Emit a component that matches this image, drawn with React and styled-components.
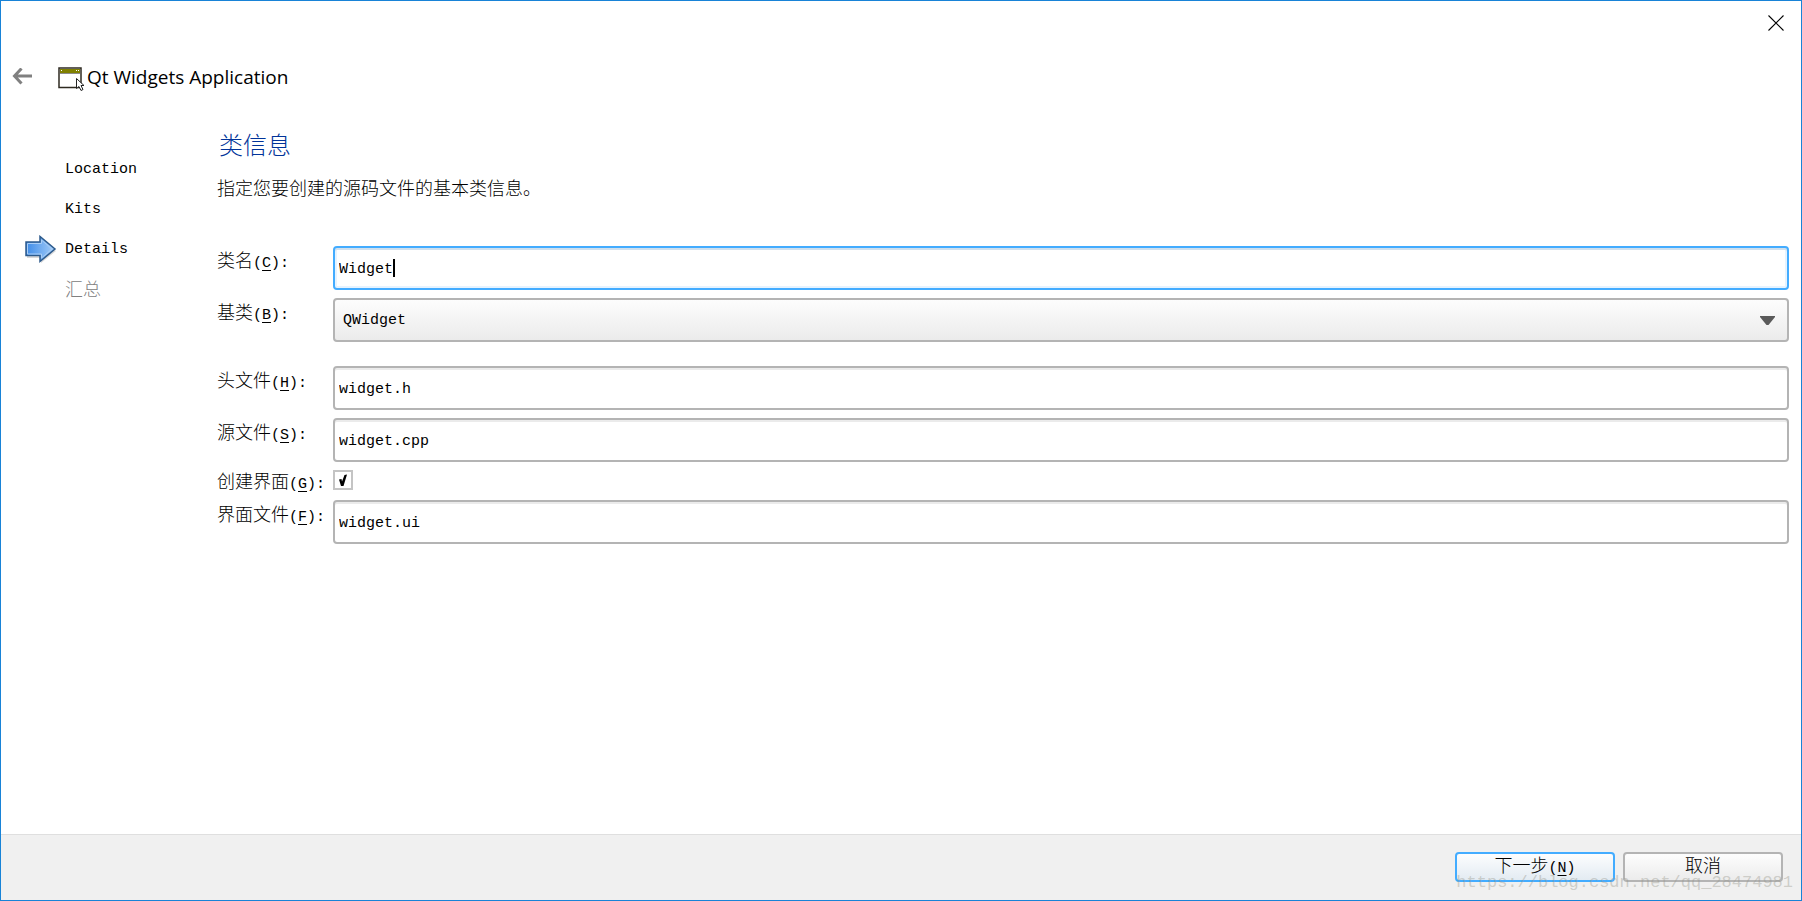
import React, { useState } from 'react';
import styled, { createGlobalStyle, css } from 'styled-components';

const GlobalStyle = createGlobalStyle`
    * {
        box-sizing: border-box;
    }

    body {
        margin: 0;
        font-family: "Liberation Mono", "Noto Sans CJK SC", monospace;
        font-size: 15px;
        line-height: 20px;
        color: #000;
    }
`;

const Window = styled.div`
    position: relative;
    display: flex;
    flex-direction: column;
    min-height: 100vh;
    border: 1px solid #1883d7;
    background: #fff;
`;

const TitleBar = styled.div`
    display: flex;
    justify-content: flex-end;
    padding: 14px 17px 0 0;
`;

const IconButton = styled.button`
    display: flex;
    padding: 0;
    border: 0;
    background: none;
`;

const Header = styled.header`
    display: flex;
    align-items: center;
    height: 28px;
    margin-top: 32px;
    padding-left: 11px;
`;

const AppIcon = styled.svg`
    margin: 4px 1px 0 25px;
`;

const Title = styled.h1`
    margin: 0;
    font: 400 19px/28px "Open Sans", "Noto Sans", sans-serif;
`;

const Body = styled.div`
    display: flex;
    flex: 1;
    padding: 37px 12px 28px 23px;
`;

const Steps = styled.ol`
    flex: none;
    width: 193px;
    margin: 0;
    padding: 22px 0 0;
    list-style: none;
`;

const Step = styled.li`
    display: flex;
    align-items: center;
    height: 40px;
    color: ${props => props.$pending ? '#808080' : '#000'};
`;

const Marker = styled.span`
    display: flex;
    flex: none;
    width: 41px;
`;

const Cjk = styled.span`
    font-family: "Noto Sans CJK SC", sans-serif;
    font-size: 18px;
    font-weight: 300;
`;

const Page = styled.main`
    flex: 1;
    min-width: 0;
`;

const Heading = styled.h2`
    margin: 0;
    padding-left: 2px;
    font: 300 24px/32px "Noto Sans CJK SC", sans-serif;
    color: #003399;
`;

const Description = styled.p`
    margin: 15px 0 47px;
    font: 300 18px/24px "Noto Sans CJK SC", sans-serif;
`;

const Form = styled.form`
    display: flex;
    flex-direction: column;
    gap: 8px;
`;

const Row = styled.div`
    display: grid;
    grid-template-columns: 116px 1fr;
    align-items: start;
    margin-bottom: ${props => props.$spaced ? '16px' : '0'};
`;

const Label = styled.label`
    padding-top: ${props => props.$compact ? '0' : '3px'};
    white-space: nowrap;
`;

const Mnemonic = styled.span`
    text-decoration: underline;
    text-underline-offset: 3px;
`;

const field = css`
    width: 100%;
    height: 44px;
    border: 2px solid #b4b4b4;
    border-radius: 4px;
    font: inherit;
    color: #000;
    outline: none;
`;

const TextInput = styled.input`
    ${field}
    padding: 3px 4px 0;
    background: #fff;
    box-shadow: inset 0 2px #ebebeb;
    caret-color: transparent;

    &:focus {
        border-color: #43acff;
        box-shadow: inset 0 2px #d0e0ee, inset 0 0 0 2px #e6f3ff;
    }
`;

const Stack = styled.div`
    display: grid;
    align-items: center;

    & > * {
        grid-area: 1 / 1;
    }
`;

const TextCursor = styled.span`
    visibility: hidden;
    width: 2px;
    height: 18px;
    margin-left: 6px;
    background: #000;
    pointer-events: none;

    ${TextInput}:focus + & {
        visibility: visible;
    }
`;

const Select = styled.select`
    ${field}
    padding: 2px 40px 0 8px;
    appearance: none;
    background: linear-gradient(#fdfdfd, #ebebeb);
`;

const Caret = styled.svg`
    justify-self: end;
    margin-right: 14px;
    pointer-events: none;
`;

const CheckRow = styled(Row)`
    height: 22px;
`;

const CheckBox = styled(Stack)`
    width: 20px;
    height: 20px;
`;

const CheckInput = styled.input`
    width: 20px;
    height: 20px;
    margin: 0;
    border: 2px solid #c4c4c4;
    appearance: none;
    background: #fff;

    &:not(:checked) + svg {
        display: none;
    }
`;

const Tick = styled.svg`
    pointer-events: none;
`;

const Footer = styled.footer`
    display: flex;
    justify-content: flex-end;
    gap: 8px;
    height: 66px;
    padding: 17px 18px 0;
    border-top: 1px solid #dfdfdf;
    background: #f0f0f0;
`;

const Button = styled.button`
    width: 160px;
    height: 30px;
    padding: 0 0 2px;
    border: 2px solid ${props => props.$primary ? '#43acff' : '#b4b4b4'};
    border-radius: 4px;
    background: ${props => props.$primary
        ? 'linear-gradient(#fcfdfe, #e3ebf2)'
        : 'linear-gradient(#fdfdfd, #ececec)'};
    font: inherit;
    color: #000;
`;

const Watermark = styled.span`
    position: absolute;
    right: 8px;
    bottom: 7px;
    font-size: 17px;
    color: rgba(150, 150, 140, 0.4);
    pointer-events: none;
`;

const BackIcon = () => (
    <svg width="21" height="18" viewBox="0 0 21 18" fill="none" stroke="#808080" strokeWidth="3">
        <path d="M20 8H3M9.500 .5L2.500 8l7 7.500" />
    </svg>
);

const CloseIcon = () => (
    <svg width="16" height="16" viewBox="0 0 16 16" stroke="#000" strokeWidth="1.1">
        <path d="M.5 .5l15 15M15.5 .5l-15 15" />
    </svg>
);

const WindowIcon = () => (
    <AppIcon width="28" height="25" viewBox="0 0 28 25">
        <rect x="1" y="1" width="22" height="19.500" fill="#fff" stroke="#2e2a20" strokeWidth="1.500" />
        <rect x="2" y="2" width="20" height="4" fill="#808000" />
        <rect x="2" y="6" width="20" height="1" fill="#8c8c8c" />
        <path d="M3 3h1v1H3zM18 3h1v1h-1zM20 3h1v1h-1z" fill="#fff" />
        <path d="M18.500 11.500v10l2.500-2 2 4 2-1-2-4h3z" fill="#fff" stroke="#222" />
    </AppIcon>
);

const StepArrow = () => (
    <svg width="34" height="30" viewBox="1 1 34 30">
        <defs>
            <linearGradient id="arrowFill" x1="0" y1="0" x2="1" y2="0">
                <stop offset="0" stopColor="#3f8ce8" />
                <stop offset="1" stopColor="#a5cdf8" />
            </linearGradient>
        </defs>
        <path d="M4 11h14V6l15 11-15 12v-5H4z" fill="#000" opacity=".15" />
        <path d="M3 8h14V2.500L32 15 17 27.500V21.500H3z" fill="url(#arrowFill)" stroke="#2c5a8c" strokeWidth="1.500" />
        <path d="M4.500 9.500h14V6L29 15 18.500 24v-4h-14z" fill="none" stroke="#a9cdf5" strokeWidth="1" />
    </svg>
);

const FieldLabel = ({ htmlFor, text, mnemonic, compact }) => (
    <Label htmlFor={htmlFor} $compact={compact}>
        <Cjk>{text}</Cjk>(<Mnemonic>{mnemonic}</Mnemonic>):
    </Label>
);

const TextRow = ({ id, text, mnemonic, initial, autoFocus }) => {
    const [value, setValue] = useState(initial);
    const [cursor, setCursor] = useState(initial.length);

    return (
        <Row>
            <FieldLabel htmlFor={id} text={text} mnemonic={mnemonic} />
            <Stack>
                <TextInput
                    id={id}
                    type="text"
                    spellCheck={false}
                    autoFocus={autoFocus}
                    value={value}
                    onChange={e => {
                        setValue(e.target.value);
                        setCursor(e.target.selectionStart);
                    }}
                    onKeyUp={e => setCursor(e.target.selectionStart)}
                    onClick={e => setCursor(e.target.selectionStart)}
                />
                <TextCursor style={{ translate: `${cursor}ch` }} />
            </Stack>
        </Row>
    );
};

export default function App() {
    const [generateForm, setGenerateForm] = useState(true);

    return (
        <>
            <GlobalStyle />
            <Window>
                <TitleBar>
                    <IconButton type="button" aria-label="关闭"><CloseIcon /></IconButton>
                </TitleBar>
                <Header>
                    <IconButton type="button" aria-label="返回"><BackIcon /></IconButton>
                    <WindowIcon />
                    <Title>Qt Widgets Application</Title>
                </Header>
                <Body>
                    <Steps>
                        <Step><Marker />Location</Step>
                        <Step><Marker />Kits</Step>
                        <Step aria-current="step"><Marker><StepArrow /></Marker>Details</Step>
                        <Step $pending><Marker /><span><Cjk>汇总</Cjk></span></Step>
                    </Steps>
                    <Page>
                        <Heading>类信息</Heading>
                        <Description>指定您要创建的源码文件的基本类信息。</Description>
                        <Form id="classInfo" onSubmit={e => e.preventDefault()}>
                            <TextRow id="className" text="类名" mnemonic="C" initial="Widget" autoFocus />
                            <Row $spaced>
                                <FieldLabel htmlFor="baseClass" text="基类" mnemonic="B" />
                                <Stack>
                                    <Select id="baseClass" defaultValue="QWidget">
                                        <option>QWidget</option>
                                    </Select>
                                    <Caret width="15" height="9" viewBox="0 0 15 9">
                                        <path d="M0 0h15v1L8.500 9h-2L0 1z" fill="#5a5a5a" />
                                    </Caret>
                                </Stack>
                            </Row>
                            <TextRow id="headerFile" text="头文件" mnemonic="H" initial="widget.h" />
                            <TextRow id="sourceFile" text="源文件" mnemonic="S" initial="widget.cpp" />
                            <CheckRow>
                                <FieldLabel htmlFor="generateForm" text="创建界面" mnemonic="G" compact />
                                <CheckBox>
                                    <CheckInput
                                        id="generateForm"
                                        type="checkbox"
                                        checked={generateForm}
                                        onChange={e => setGenerateForm(e.target.checked)}
                                    />
                                    <Tick width="20" height="20" viewBox="0 0 20 20">
                                        <path d="M6 9.500l2.500-.5 .5 2.500L11.500 5l2.500-.5-3.500 11.500H8z" />
                                    </Tick>
                                </CheckBox>
                            </CheckRow>
                            <TextRow id="formFile" text="界面文件" mnemonic="F" initial="widget.ui" />
                        </Form>
                    </Page>
                </Body>
                <Footer>
                    <Button type="submit" form="classInfo" $primary>
                        <Cjk>下一步</Cjk>(<Mnemonic>N</Mnemonic>)
                    </Button>
                    <Button type="button"><Cjk>取消</Cjk></Button>
                </Footer>
                <Watermark>https://blog.csdn.net/qq_28474981</Watermark>
            </Window>
        </>
    );
}
